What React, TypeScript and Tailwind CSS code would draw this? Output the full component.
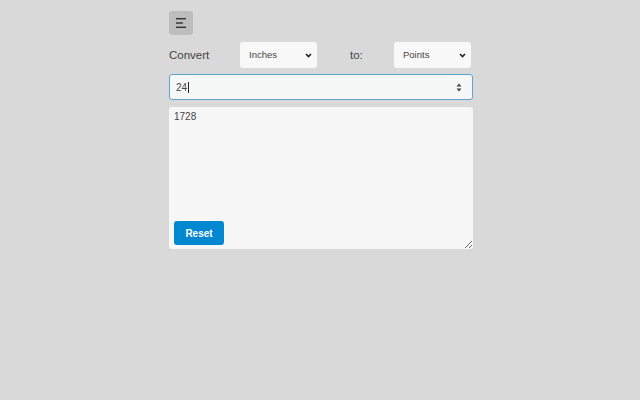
import React from "react";

function MenuIcon() {
  return (
    <svg width="12" height="12" viewBox="0 0 12 12" fill="none">
      <rect x="1" y="1" width="10" height="1.4" fill="#333" />
      <rect x="1" y="5.3" width="7" height="1.4" fill="#333" />
      <rect x="1" y="9.6" width="10" height="1.4" fill="#333" />
    </svg>
  );
}

function Spinner() {
  return (
    <svg width="6" height="9" viewBox="0 0 6 9">
      <path d="M3 0.5 L5.5 3.5 H0.5 Z" fill="#444" />
      <path d="M3 8.5 L5.5 5.5 H0.5 Z" fill="#444" />
    </svg>
  );
}

function Chevron() {
  return (
    <svg width="7" height="5" viewBox="0 0 7 5" className="pointer-events-none absolute right-[5px] top-[11px]">
      <path d="M1 1 L3.5 3.5 L6 1" stroke="#222" strokeWidth="1.6" fill="none" />
    </svg>
  );
}

function Select({ label }: { label: string }) {
  return (
    <div className="relative h-[26px]">
      <select
        defaultValue={label}
        className="block h-[26px] w-[77px] appearance-none rounded-[3px] border-0 bg-[#f8f8f8] pl-[9px] text-[9.5px] text-[#444] outline-none"
      >
        <option value={label}>{label}</option>
      </select>
      <Chevron />
    </div>
  );
}

export default function App() {
  return (
    <div
      className="min-h-[400px] w-full bg-[#d9d9d9]"
      style={{ fontFamily: '"Liberation Sans", Arial, sans-serif' }}
    >
      <div className="ml-[169px] flex w-[304px] flex-col pt-[11px]">
        <button className="flex h-6 w-6 items-center justify-center rounded-[3px] bg-[#bdbdbd]">
          <MenuIcon />
        </button>

        <div className="mt-[7px] flex h-[26px] items-center gap-[33px]">
          <span className="mt-[2px] w-[38px] text-[11.5px] text-[#444]">Convert</span>
          <Select label="Inches" />
          <span className="mt-[2px] w-[11px] text-[11.5px] text-[#444]">to:</span>
          <Select label="Points" />
        </div>

        <div className="mt-[6px] flex h-[26px] items-center justify-between rounded-[3px] border border-[#5ba5d4] bg-[#f6f7f7] pl-[6px] pr-[10px] text-[10px] text-[#444]">
          <span className="flex items-center">
            24<span className="ml-[1px] inline-block h-[11px] w-px bg-[#222]" />
          </span>
          <Spinner />
        </div>

        <div className="relative mt-[7px]">
          <textarea
            readOnly
            value="1728"
            className="block h-[142px] w-full resize rounded-[3px] border-0 bg-[#f7f7f7] px-[5px] py-[2px] text-[10px] text-[#444] outline-none"
          />
          <button className="absolute bottom-[4px] left-[5px] h-6 w-[50px] rounded-[3px] bg-[#0288d1] text-[10px] font-bold text-white">
            Reset
          </button>
        </div>
      </div>
    </div>
  );
}
